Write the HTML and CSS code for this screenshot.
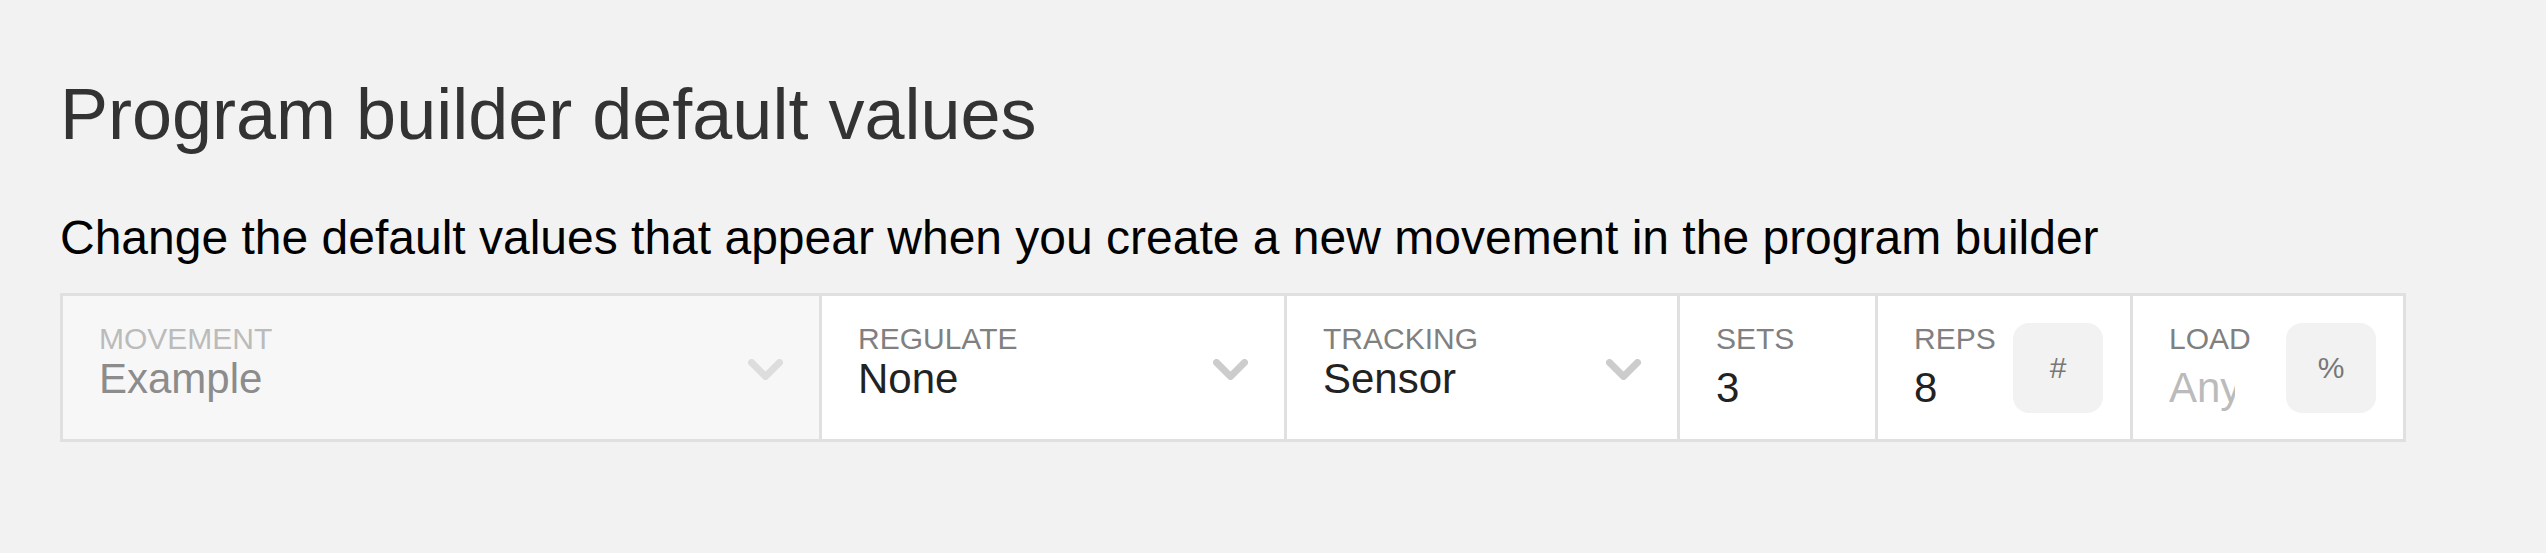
FILE: index.html
```html
<!DOCTYPE html>
<html lang="en">
<head>
<meta charset="utf-8">
<title>Program builder default values</title>
<link rel="stylesheet" href="styles.css">
</head>
<body>
<main class="page">
  <h1 class="title">Program builder default values</h1>
  <p class="subtitle">Change the default values that appear when you create a new movement in the program builder</p>
  <div class="defaults">
    <div class="cell cell--movement cell--disabled">
      <div class="field">
        <span class="label">Movement</span>
        <span class="value">Example</span>
      </div>
      <svg class="chevron" viewBox="0 0 35 21" aria-hidden="true"><path d="M3.5 3.5 L17.5 17.5 L31.5 3.5"/></svg>
    </div>
    <div class="cell cell--regulate">
      <div class="field">
        <span class="label">Regulate</span>
        <span class="value">None</span>
      </div>
      <svg class="chevron" viewBox="0 0 35 21" aria-hidden="true"><path d="M3.5 3.5 L17.5 17.5 L31.5 3.5"/></svg>
    </div>
    <div class="cell cell--tracking">
      <div class="field">
        <span class="label">Tracking</span>
        <span class="value">Sensor</span>
      </div>
      <svg class="chevron" viewBox="0 0 35 21" aria-hidden="true"><path d="M3.5 3.5 L17.5 17.5 L31.5 3.5"/></svg>
    </div>
    <div class="cell cell--sets">
      <div class="field">
        <span class="label">Sets</span>
        <input class="input" type="text" value="3">
      </div>
    </div>
    <div class="cell cell--reps cell--unit">
      <div class="field">
        <span class="label">Reps</span>
        <input class="input" type="text" value="8">
      </div>
      <span class="unit">#</span>
    </div>
    <div class="cell cell--load cell--unit">
      <div class="field">
        <span class="label">Load</span>
        <input class="input" type="text" placeholder="Any">
      </div>
      <span class="unit">%</span>
    </div>
  </div>
</main>
</body>
</html>
```
FILE: styles.css
```css
body {
  margin: 0;
  background: #f2f2f2;
  font-family: "Liberation Sans", Arial, sans-serif;
}

.page {
  padding: 72px 0 0 60px;
}

.title {
  margin: 0;
  font-size: 72px;
  line-height: 85px;
  font-weight: 400;
  color: #333;
}

.subtitle {
  margin: 52px 0 0;
  font-size: 48px;
  line-height: 58px;
  color: #000;
}

.defaults {
  margin-top: 26px;
  display: flex;
  width: fit-content;
  border: 3px solid #e0e0e0;
  background: #fff;
}

.cell {
  box-sizing: border-box;
  flex: none;
  height: 143px;
  display: flex;
  align-items: center;
  padding: 0 36px;
  border-left: 3px solid #e0e0e0;
}

.cell:first-child {
  border-left: none;
}

.cell--movement { width: 756px; }
.cell--regulate { width: 465px; }
.cell--tracking { width: 393px; }
.cell--sets { width: 198px; }
.cell--reps { width: 255px; }
.cell--load { width: 273px; }

.cell--unit {
  padding-right: 27px;
}

.field {
  align-self: flex-start;
  flex: 1;
  min-width: 0;
  display: flex;
  flex-direction: column;
  padding-top: 26px;
}

.label {
  font-size: 30px;
  line-height: 34px;
  color: #808080;
  text-transform: uppercase;
  white-space: nowrap;
}

.value {
  font-size: 42px;
  line-height: 46px;
  color: #222;
}

.chevron {
  flex: none;
  width: 35px;
  height: 21px;
  margin-top: 4px;
  fill: none;
  stroke: #cccccc;
  stroke-width: 7;
  stroke-linecap: round;
  stroke-linejoin: round;
}

.cell--disabled {
  background: #f7f7f7;
}

.cell--disabled .label {
  color: #bbbbbb;
}

.cell--disabled .value {
  color: #8c8c8c;
}

.cell--disabled .chevron {
  stroke: #dddddd;
}

.input {
  margin-top: 9px;
  width: 66px;
  height: 46px;
  padding: 0;
  border: 0;
  background: transparent;
  font-family: "Liberation Sans", Arial, sans-serif;
  font-size: 42px;
  color: #222;
  outline: none;
}

.input::placeholder {
  color: #bbbbbb;
  opacity: 1;
}

.unit {
  flex: none;
  width: 90px;
  height: 90px;
  border-radius: 16px;
  background: #f2f2f2;
  display: flex;
  align-items: center;
  justify-content: center;
  font-size: 30px;
  color: #777;
}
```
